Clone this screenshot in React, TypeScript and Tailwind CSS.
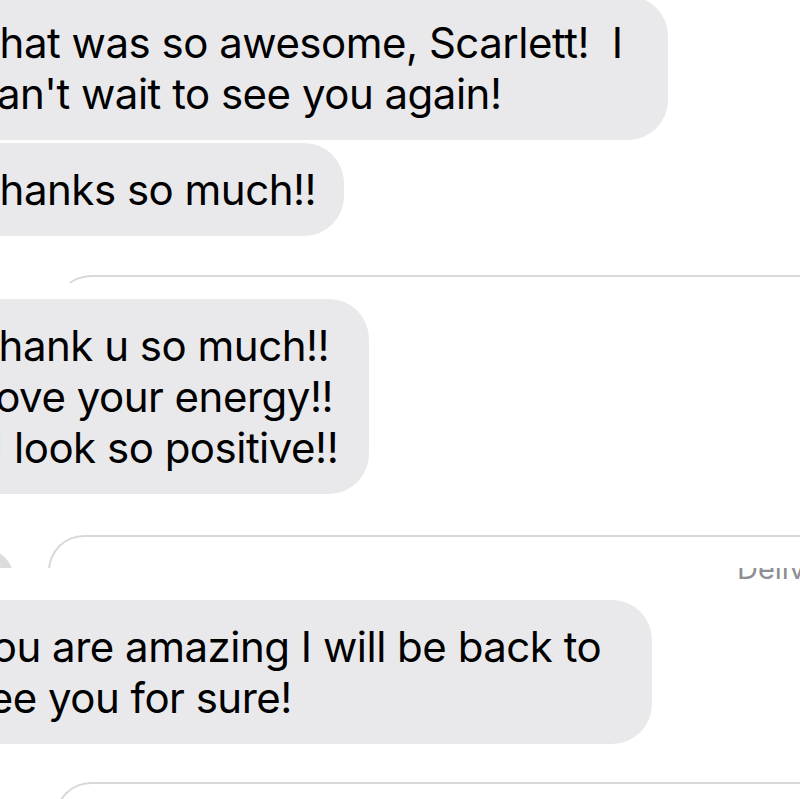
const bubbles = {
  first: ["That was so awesome, Scarlett!  I", "can't wait to see you again!"],
  second: ["Thanks so much!!"],
  third: ["Thank u so much!!", "Love your energy!!", "U look so positive!!"],
  fourth: ["You are amazing I will be back to", "see you for sure!"],
};

function Bubble({ lines, width, className = "" }: { lines: string[]; width: string; className?: string }) {
  return (
    <div className={`-ml-[60px] ${width} shrink-0 rounded-[40px] bg-[#e9e9eb] py-[21px] ${className}`}>
      {lines.map((l) => (
        <div key={l} className="whitespace-pre text-[42px] leading-[51px] tracking-[-0.5px] text-black">
          {l}
        </div>
      ))}
    </div>
  );
}

// top edge of the next (cropped) screenshot strip
function CardEdge({ left, visible }: { left: string; visible: string }) {
  return (
    <div className={`${visible} overflow-hidden ${left} flex-1`}>
      <div className="h-[80px] rounded-tl-[36px] border-l-2 border-t-2 border-[#d9d9d9]" />
    </div>
  );
}

export default function App() {
  return (
    <div className="flex h-[799px] w-[800px] flex-col overflow-hidden bg-white font-['Inter',sans-serif]">
      <Bubble lines={bubbles.first} width="w-[728px]" className="-mt-[4px] pl-[33px]" />
      <Bubble lines={bubbles.second} width="w-[404px]" className="mt-[3px] pl-[33px]" />

      <div className="mt-[39px] flex">
        <CardEdge left="ml-[55px]" visible="h-[8px]" />
      </div>

      <Bubble lines={bubbles.third} width="w-[429px]" className="mt-[16px] pl-[32px]" />

      {/* cropped contact row */}
      <div className="mt-[41px] flex h-[33px] overflow-hidden">
        <div className="-ml-[46px] mt-[14px] h-[60px] w-[60px] shrink-0 rounded-full bg-[#dcdcdc]" />
        <div className="ml-[34px] flex-1">
          <div className="h-[80px] rounded-tl-[36px] border-l-2 border-t-2 border-[#d9d9d9]" />
        </div>
      </div>
      <div className="flex h-[12px] justify-end overflow-hidden">
        <div className="-mt-[9px] mr-[-52px] w-[115px] text-[29px] leading-[20px] text-[#8e8e93]">Delivered</div>
      </div>

      <Bubble lines={bubbles.fourth} width="w-[712px]" className="mt-[20px] pl-[27px]" />

      <div className="mt-[38px] flex">
        <CardEdge left="ml-[55px]" visible="h-[17px]" />
      </div>
    </div>
  );
}
